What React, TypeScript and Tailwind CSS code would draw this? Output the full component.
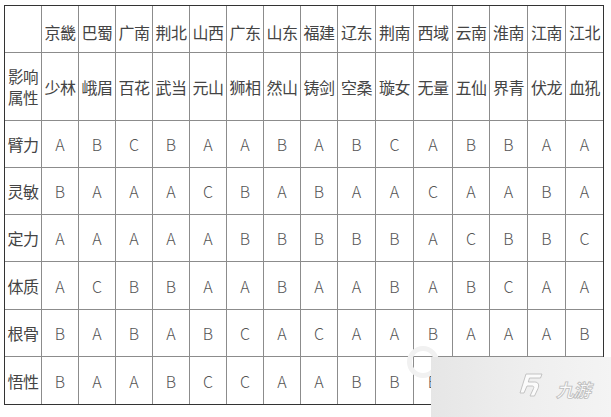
import React from 'react';

const regions = ['京畿', '巴蜀', '广南', '荆北', '山西', '广东', '山东', '福建', '辽东', '荆南', '西域', '云南', '淮南', '江南', '江北'];
const schools = ['少林', '峨眉', '百花', '武当', '元山', '狮相', '然山', '铸剑', '空桑', '璇女', '无量', '五仙', '界青', '伏龙', '血犼'];

// last row is partly hidden under the logo box in the picture
const stats: [string, string][] = [
  ['臂力', 'ABCBAABABCABBAA'],
  ['灵敏', 'BAAACBABAACAABA'],
  ['定力', 'AAAAABBBBBACBBC'],
  ['体质', 'ACBBAABAABABCAA'],
  ['根骨', 'BABABCACAABAAAB'],
  ['悟性', 'BAABCCAABBB    '],
];

const font = { fontFamily: '"Noto Sans CJK SC", "Microsoft YaHei", sans-serif' };

const Cell: React.FC<{ col: number; row: number; children?: React.ReactNode }> = ({ col, row, children }) => (
  <div
    className={`flex items-center justify-center text-center border-[#8c8c8c] ${col < 15 ? 'border-r' : ''} ${row < 7 ? 'border-b' : ''}`}
  >
    {children}
  </div>
);

const App: React.FC = () => {
  return (
    <div className="relative w-[611px] h-[417px] bg-white overflow-hidden" style={font}>
      <div className="ml-[4px] mt-[5px] w-[600px] border border-[#333]">
        <div className="grid grid-cols-[37px_37px_37px_37px_37px_37px_37px_37px_37px_38px_38px_39px_37px_38px_38px_37px] grid-rows-[47px_68px_47px_47px_47px_48px_47px_47px] text-[16px] text-[#444]">
          <Cell col={0} row={0} />
          {regions.map((r, i) => (
            <Cell key={r} col={i + 1} row={0}>
              <span className="pt-[5px] tracking-[-0.5px]">{r}</span>
            </Cell>
          ))}

          <Cell col={0} row={1}>
            <div className="flex flex-col gap-[1px] tracking-[-0.5px] text-[15.5px]">
              <span className="leading-[20px]">影响</span>
              <span className="leading-[20px]">属性</span>
            </div>
          </Cell>
          {schools.map((s, i) => (
            <Cell key={s} col={i + 1} row={1}>
              <span className="tracking-[-0.5px]">{s}</span>
            </Cell>
          ))}

          {stats.map(([label, grades], r) => (
            <React.Fragment key={label}>
              <Cell col={0} row={r + 2}>
                <span className="tracking-[-0.5px]">{label}</span>
              </Cell>
              {grades.split('').map((g, i) => (
                <Cell key={i} col={i + 1} row={r + 2}>
                  <span className="font-light text-[#555]">{g.trim()}</span>
                </Cell>
              ))}
            </React.Fragment>
          ))}
        </div>
      </div>

      {/* faint ring of the site watermark */}
      <div className="absolute left-[407px] top-[346px] w-[32px] h-[32px] rounded-full border-[5px] border-[#f1f1f1] pointer-events-none" />

      {/* logo box */}
      <div className="absolute left-[431px] top-[357px] w-[180px] h-[60px] bg-gradient-to-r from-[#e6e6e6] via-[#eeeeee] to-[#f4f4f4]">
        <svg className="absolute left-[88px] top-[16px]" width="24" height="24" viewBox="0 0 24 24">
          <path
            d="M7 1 L23 1 L21.5 5 L10.5 5 L9.3 9 L15.5 9 C19.5 9 20.5 12 19 15.5 L15.5 23 L11 23 L14.5 15.5 C15.2 14 14.8 13 13.2 13 L8 13 L5 20 L1 20 Z"
            fill="#fbfbfb"
            stroke="#bdbdbd"
            strokeWidth="0.9"
            strokeLinejoin="round"
          />
        </svg>
        <span className="absolute left-[125px] top-[22px] italic font-bold text-[18px] leading-[20px] text-[#fbfbfb] tracking-[-1px] [-webkit-text-stroke:0.8px_#bdbdbd]">
          九游
        </span>
      </div>
    </div>
  );
};

export default App;
